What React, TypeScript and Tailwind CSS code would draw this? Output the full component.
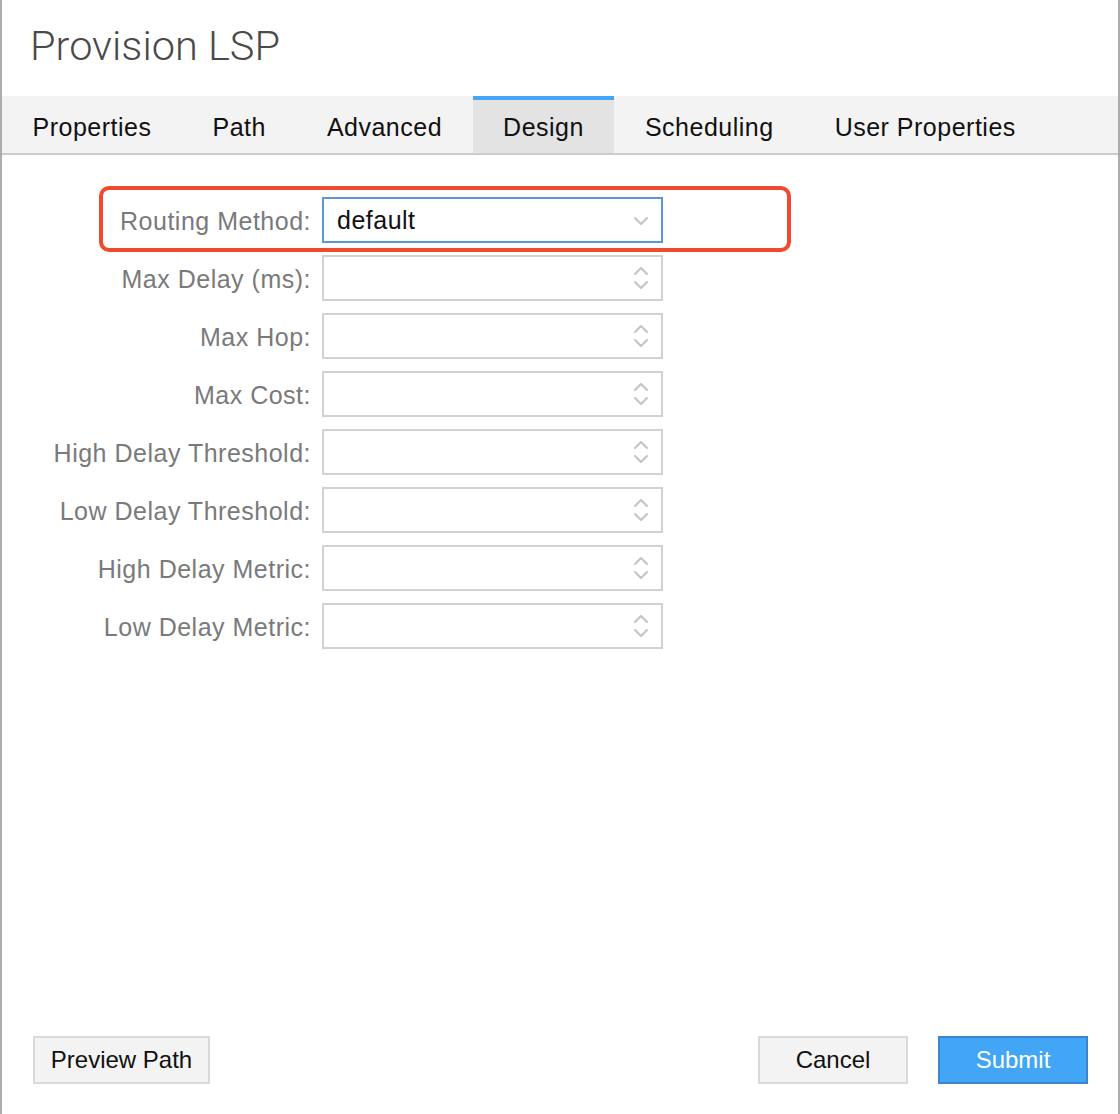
import React from "react";

const rows = [
  "Max Delay (ms):",
  "Max Hop:",
  "Max Cost:",
  "High Delay Threshold:",
  "Low Delay Threshold:",
  "High Delay Metric:",
  "Low Delay Metric:",
];

const tabs = ["Properties", "Path", "Advanced", "Design", "Scheduling", "User Properties"];

function Chevron({ up = false }: { up?: boolean }) {
  return (
    <svg width="16" height="10" viewBox="0 0 16 10" fill="none">
      <path
        d={up ? "M2 8 L8 2 L14 8" : "M2 2 L8 8 L14 2"}
        stroke="#c4c4c4"
        strokeWidth="2"
        strokeLinecap="round"
        strokeLinejoin="round"
      />
    </svg>
  );
}

export default function App() {
  return (
    <div
      className="relative flex h-[1114px] w-[1120px] flex-col border-x-2 border-[#acacac] bg-white"
      style={{ fontFamily: "'Liberation Sans', Arial, sans-serif" }}
    >
      <div className="flex h-[96px] items-center pl-[28px] pb-[4px]">
        <h1
          className="text-[41.5px] font-light leading-none text-[#4a4a4a]"
          style={{ fontFamily: "Roboto, 'Liberation Sans', sans-serif", fontWeight: 300 }}
        >
          Provision LSP
        </h1>
      </div>
      <div className="flex h-[59px] border-b-2 border-[#cccccc] bg-[#f3f3f3]">
        {tabs.map((t) => (
          <div
            key={t}
            className={
              t === "Design"
                ? "flex items-center border-t-4 border-[#42a5f5] bg-[#e3e3e3] px-[30.5px] pt-[2px] text-[25px] tracking-[0.5px] text-[#111]"
                : "flex items-center border-t-4 border-transparent px-[30.5px] pt-[2px] text-[25px] tracking-[0.5px] text-[#111]"
            }
          >
            {t}
          </div>
        ))}
      </div>

      <div className="flex-1 pt-[42px]">
        <div className="relative grid grid-cols-[309px_341px] gap-x-[11px] gap-y-[12px]">
          <div className="pointer-events-none absolute left-[97px] top-[-11px] h-[66px] w-[692px] rounded-[10px] border-4 border-[#ef4a2d]" />
          <div className="flex h-[46px] items-center justify-end pt-[3px] text-[25px] tracking-[0.5px] text-[#7a7a7a]">
            Routing Method:
          </div>
          <div className="flex h-[46px] items-center justify-between border-2 border-[#5a98d4] pl-[13px] pr-[12px] pt-[2px] text-[25px] tracking-[0.5px] text-[#111]">
            <span>default</span>
            <Chevron />
          </div>
          {rows.map((r) => (
            <React.Fragment key={r}>
              <div className="flex h-[46px] items-center justify-end pt-[3px] text-[25px] tracking-[0.5px] text-[#7a7a7a]">{r}</div>
              <div className="flex h-[46px] items-center justify-end border-2 border-[#d2d2d2] pr-[12px]">
                <div className="flex flex-col items-center gap-[4px]">
                  <Chevron up />
                  <Chevron />
                </div>
              </div>
            </React.Fragment>
          ))}
        </div>
      </div>

      <div className="flex items-center justify-between pb-[30px] pl-[31px] pr-[30px]">
        <button className="h-[48px] w-[177px] border-2 border-[#d9d9d9] bg-[#f3f3f3] text-[24px] text-[#111]">
          Preview Path
        </button>
        <div className="flex gap-[30px]">
          <button className="h-[48px] w-[150px] border-2 border-[#d9d9d9] bg-[#f3f3f3] text-[24px] text-[#111]">
            Cancel
          </button>
          <button className="h-[48px] w-[150px] border-2 border-[#3a86cf] bg-[#42a5f5] text-[24px] text-white">
            Submit
          </button>
        </div>
      </div>
    </div>
  );
}
